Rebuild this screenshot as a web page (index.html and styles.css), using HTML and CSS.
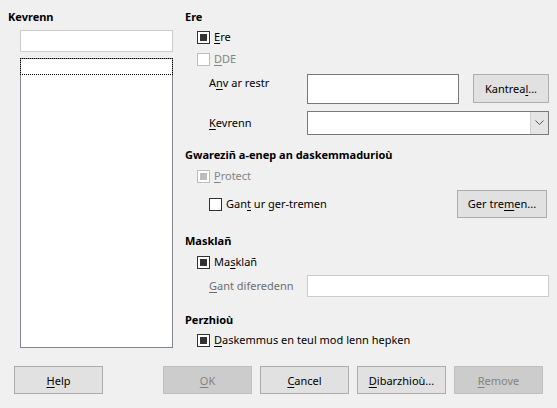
FILE: index.html
```html
<!DOCTYPE html>
<html>
<head>
<meta charset="utf-8">
<link rel="stylesheet" href="styles.css">
</head>
<body>
<div class="dialog">
  <div class="main">
    <div class="left">
      <div class="heading">Kevrenn</div>
      <div class="search"></div>
      <div class="list"><div class="focus"></div></div>
    </div>
    <div class="right">
      <div class="heading">Ere</div>
      <div class="row r-ere"><span class="cb checked"></span><span><u>E</u>re</span></div>
      <div class="row r-dde disabled"><span class="cb"></span><span><u>D</u>DE</span></div>
      <div class="row r-anv indent">
        <span class="label top">A<u>n</u>v ar restr</span>
        <span class="field big"></span>
        <span class="btn kantreal">Kantrea<u>l</u>...</span>
      </div>
      <div class="row r-kev indent">
        <span class="label"><u>K</u>evrenn</span>
        <span class="combo"><span class="arrow"><svg width="9" height="6" viewBox="0 0 9 6"><path d="M0.5 0.5 L4.5 4.5 L8.5 0.5" fill="none" stroke="#555" stroke-width="1"/></svg></span></span>
      </div>
      <div class="heading h2">Gwareziñ a-enep an daskemmadurioù</div>
      <div class="row r-prot disabled"><span class="cb checked"></span><span><u>P</u>rotect</span></div>
      <div class="row r-pass indent">
        <span class="cb"></span><span class="grow">Gan<u>t</u> ur ger-tremen</span>
        <span class="btn gertremen">Ger tre<u>m</u>en...</span>
      </div>
      <div class="heading h3">Masklañ</div>
      <div class="row r-mask"><span class="cb checked"></span><span>Ma<u>s</u>klañ</span></div>
      <div class="row r-dif indent">
        <span class="label dim"><u>G</u>ant diferedenn</span>
        <span class="field dis"></span>
      </div>
      <div class="heading h4">Perzhioù</div>
      <div class="row r-dask"><span class="cb checked"></span><span><u>D</u>askemmus en teul mod lenn hepken</span></div>
    </div>
  </div>
  <div class="footer">
    <span class="btn fb help"><u>H</u>elp</span>
    <span class="btn fb off ok"><u>O</u>K</span>
    <span class="btn fb"><u>C</u>ancel</span>
    <span class="btn fb"><u>D</u>ibarzhioù...</span>
    <span class="btn fb off"><u>R</u>emove</span>
  </div>
</div>
</body>
</html>
```
FILE: styles.css
```css
html, body {
  margin: 0;
  padding: 0;
  background: #f0f0f0;
}
body {
  font-family: "Noto Sans", "Open Sans", sans-serif;
  font-size: 11px;
  color: #000;
  width: 557px;
  height: 408px;
  overflow: hidden;
}
u { text-decoration: underline; text-underline-offset: 2px; }
.dialog {
  display: flex;
  flex-direction: column;
}
.main {
  display: flex;
  height: 366px;
}
.left {
  width: 185px;
  display: flex;
  flex-direction: column;
}
.heading {
  font-weight: bold;
  line-height: 16px;
  height: 16px;
  white-space: nowrap;
}
.left .heading {
  padding: 9px 0 0 8px;
}
.search {
  margin: 5px 0 0 20px;
  width: 153px;
  height: 22px;
  box-sizing: border-box;
  background: #fff;
  border: 1px solid #cccccc;
}
.list {
  margin: 6px 0 0 20px;
  width: 153px;
  height: 290px;
  box-sizing: border-box;
  background: #fff;
  border: 1px solid #828790;
}
.focus {
  margin: -1px -1px 0 -1px;
  height: 17px;
  box-sizing: border-box;
  border: 1px dotted #000;
}
.right {
  width: 364px;
  display: flex;
  flex-direction: column;
}
.right > .heading:first-child { margin-top: 9px; }
.row {
  display: flex;
  align-items: center;
  padding-left: 12px;
  white-space: nowrap;
  line-height: 16px;
}
.row.indent { padding-left: 24px; }
.cb {
  width: 13px;
  height: 13px;
  box-sizing: border-box;
  border: 1px solid #333;
  background: #fff;
  margin-right: 4px;
  position: relative;
  flex: none;
}
.cb.checked::after {
  content: "";
  position: absolute;
  left: 2px;
  top: 2px;
  width: 7px;
  height: 7px;
  background: #333;
}
.disabled { color: #838383; }
.disabled .cb { border-color: #bcbcbc; }
.disabled .cb.checked::after { background: #bcbcbc; }
.r-ere { height: 18px; margin-top: 3px; }
.r-dde { height: 18px; margin-top: 4px; }
.r-anv { height: 30px; margin-top: 6px; align-items: flex-start; }
.label { width: 98px; flex: none; }
.label.top { padding-top: 1px; }
.dim { color: #6d6d6d; }
.field {
  background: #fff;
  box-sizing: border-box;
  border: 1px solid #7a7a7a;
}
.field.big { width: 152px; height: 30px; margin-right: 14px; }
.field.dis { width: 242px; height: 22px; border-color: #cccccc; }
.btn {
  display: flex;
  align-items: center;
  justify-content: center;
  box-sizing: border-box;
  background: #e1e1e1;
  border: 1px solid #adadad;
  white-space: nowrap;
}
.kantreal { width: 76px; height: 29px; }
.r-kev { height: 24px; margin-top: 7px; }
.combo {
  width: 242px;
  height: 24px;
  box-sizing: border-box;
  border: 1px solid #7a7a7a;
  background: #fff;
  display: flex;
  justify-content: flex-end;
}
.arrow {
  width: 17px;
  background: #e5e5e5;
  border-left: 1px solid #cfcfcf;
  display: flex;
  align-items: center;
  justify-content: center;
}
.h2 { margin-top: 12px; }
.r-prot { height: 18px; margin-top: 4px; }
.r-pass { height: 28px; margin-top: 5px; }
.grow { flex: 1; }
.gertremen { width: 90px; height: 28px; margin-right: 2px; }
.h3 { margin-top: 15px; }
.r-mask { height: 18px; margin-top: 4px; }
.r-dif { height: 22px; margin-top: 4px; }
.h4 { margin-top: 15px; }
.r-dask { height: 18px; margin-top: 3px; }
.footer {
  display: flex;
  gap: 8px;
  padding-left: 14px;
}
.fb { width: 89px; height: 28px; }
.help { margin-right: 52px; }
.off {
  background: #cccccc;
  border-color: #bfbfbf;
  color: #838383;
}
```
